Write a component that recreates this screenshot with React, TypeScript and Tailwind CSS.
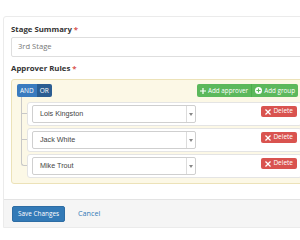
import React from "react";

const PlusIcon = () => (
  <svg width="6" height="6" viewBox="0 0 10 10" className="shrink-0">
    <path d="M4 0h2v4h4v2H6v4H4V6H0V4h4z" fill="#fff" />
  </svg>
);

const PlusSignIcon = () => (
  <svg width="7" height="7" viewBox="0 0 10 10" className="shrink-0">
    <circle cx="5" cy="5" r="5" fill="#fff" />
    <path d="M4.2 2h1.6v2.2H8v1.6H5.8V8H4.2V5.8H2V4.2h2.2z" fill="#5cb85c" />
  </svg>
);

const XIcon = () => (
  <svg width="6" height="6" viewBox="0 0 10 10" className="shrink-0">
    <path d="M1.5 0L5 3.5 8.5 0 10 1.5 6.5 5 10 8.5 8.5 10 5 6.5 1.5 10 0 8.5 3.5 5 0 1.5z" fill="#fff" />
  </svg>
);

function Rule({ name, last, first }: { name: string; last?: boolean; first?: boolean }) {
  return (
    <div className="relative h-[24px]">
      <div
        className={`absolute left-[-6px] w-[6px] border-l border-b border-[#c8c8c8] ${first ? "top-[-5px] h-[17px]" : "top-[-2px] h-[14px]"} ${last ? "rounded-bl-[3px]" : ""}`}
      />
      {!last && <div className="absolute left-[-6px] top-[12px] h-[14px] border-l border-[#c8c8c8]" />}
      <div className="flex h-full w-[275px] items-start rounded-[3px] border border-[#e4e4e4] bg-white pl-[4px] pt-[2px]">
        <div className="flex h-[18px] w-[164px] items-center rounded-[2px] border border-[#cfcfcf] bg-white">
          <span
            className="flex-1 pl-[7px] text-[7.2px] text-[#444]"
            style={{ fontFamily: '"Liberation Sans", Arial, sans-serif' }}
          >
            {name}
          </span>
          <span className="flex h-full w-[9px] items-center justify-center border-l border-[#dcdcdc]">
            <svg width="4" height="3" viewBox="0 0 4 3">
              <path d="M0 0h4L2 3z" fill="#888" />
            </svg>
          </span>
        </div>
        <div className="ml-auto mr-[4px] mt-[1px] flex h-[11px] items-center gap-[2px] rounded-[2px] bg-[#d9534f] px-[4px] text-[6.5px] leading-none text-white">
          <XIcon />
          <span>Delete</span>
        </div>
      </div>
    </div>
  );
}

export default function App() {
  return (
    <div
      className="relative h-[240px] w-[300px] overflow-hidden bg-white"
      style={{ fontFamily: '"Open Sans", "Noto Sans", sans-serif' }}
    >
      <div className="ml-[3px] mt-[16px] w-[310px] rounded-tl-[3px] border border-[#ebebeb] bg-white">
        <div className="pl-[7px] pt-[7px] pb-[15px]">
          <div className="flex h-[12px] items-center text-[7.8px] font-bold text-[#333]">
            Stage Summary<span className="ml-[2px] text-[#d9534f]">*</span>
          </div>
          <div className="mt-[1px] flex h-[20px] items-center rounded-[2px] border border-[#dedede] bg-white pl-[6px] text-[7.6px] text-[#777]">
            3rd Stage
          </div>
          <div className="mt-[6px] flex h-[12px] items-center text-[7.8px] font-bold text-[#333]">
            Approver Rules<span className="ml-[2px] text-[#d9534f]">*</span>
          </div>
          <div className="mt-[4px] h-[105px] w-[293px] rounded-[3px] border border-[#ece2b8] bg-[#fcf8e6] pl-[5px] pr-[5px] pt-[4px]">
            <div className="flex h-[13px] items-center">
              <div className="flex h-full overflow-hidden rounded-[2px] text-[6.5px] text-white">
                <span className="flex items-center bg-[#3a7bbf] px-[3px]">AND</span>
                <span className="flex items-center bg-[#2b5d92] px-[3px]">OR</span>
              </div>
              <div className="ml-auto flex h-full overflow-hidden rounded-[2px] text-[6.3px] text-white">
                <span className="flex items-center gap-[2px] bg-[#5cb85c] px-[3px]">
                  <PlusIcon />
                  Add approver
                </span>
                <span className="flex items-center gap-[2px] border-l border-[#4cae4c] bg-[#5cb85c] px-[3px]">
                  <PlusSignIcon />
                  Add group
                </span>
              </div>
            </div>
            <div className="ml-[10px] mt-[5px] flex flex-col gap-[2px]">
              <Rule name="Lois Kingston" first />
              <Rule name="Jack White" />
              <Rule name="Mike Trout" last />
            </div>
          </div>
        </div>
        <div className="flex h-[28px] items-center border-t border-[#e3e3e3] bg-[#f5f5f5] pl-[8px]">
          <div className="flex h-[16px] items-center rounded-[2px] border border-[#2e6da4] bg-[#337ab7] px-[5px] text-[6.4px] text-white">
            Save Changes
          </div>
          <span className="ml-[13px] text-[7.2px] text-[#337ab7]">Cancel</span>
        </div>
      </div>
    </div>
  );
}
